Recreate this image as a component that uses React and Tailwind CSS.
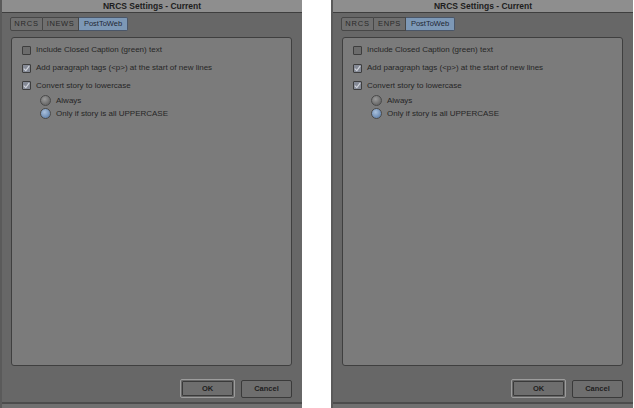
import React from 'react';

const font = { fontFamily: '"Liberation Sans", Arial, sans-serif' };

function Checkbox({ checked }) {
  return (
    <div
      className={`w-[9px] h-[9px] rounded-[1px] border border-[#3d3d3d] flex items-center justify-center ${
        checked ? 'bg-[#858a96]' : 'bg-[#6c6c6c]'
      }`}
    >
      {checked && (
        <svg className="w-[7px] h-[7px]" viewBox="0 0 10 10" fill="none">
          <path d="M1.5 5.5l2.5 2.5 4.5-6" stroke="#d2d5dc" strokeWidth="1.6" strokeLinecap="round" strokeLinejoin="round" />
        </svg>
      )}
    </div>
  );
}

function Radio({ selected }) {
  return (
    <div
      className={`w-[11px] h-[11px] rounded-full border border-[#4a4a4a] ${
        selected
          ? 'bg-[radial-gradient(circle_at_40%_35%,#a9c0dc,#6b8bb3_70%)]'
          : 'bg-[radial-gradient(circle_at_40%_35%,#9a9a9a,#6a6a6a_70%)]'
      }`}
    />
  );
}

function Dialog({ second }) {
  return (
    <div className="w-[302px] h-[408px] flex flex-col bg-[#676767] border-l-2 border-[#5a5a5a]" style={font}>
      <div className="h-[13px] bg-[#8e8e8e] border-b border-[#3e3e3e] flex items-center justify-center text-[8.5px] font-bold text-[#1d1d1d] leading-none">
        NRCS Settings - Current
      </div>
      <div className="flex-1 flex flex-col pl-[8px] pr-[10px]">
        <div className="mt-[4px] flex h-[14px] text-[7.5px] text-[#2a2a2a] leading-none">
          <div className="w-[33px] flex items-center justify-center border border-[#474747] rounded-l-[2px] bg-[#6f6f6f] tracking-[0.8px]">
            NRCS
          </div>
          <div className={`${second ? 'w-[32px]' : 'w-[36px]'} flex items-center justify-center border-y border-r border-[#474747] bg-[#6f6f6f] tracking-[0.6px]`}>
            {second ? 'ENPS' : 'INEWS'}
          </div>
          <div className="w-[49px] flex items-center justify-center border-y border-r border-[#4a5668] rounded-r-[2px] bg-[#7d98b6] text-[#1f2733]">
            PostToWeb
          </div>
        </div>
        <div className="mt-[6px] ml-[1px] h-[329px] rounded-[3px] border border-[#3f3f3f] bg-[#7b7b7b] pt-[3px] pl-[10px] text-[8px] text-[#262626] leading-none">
          <div className="h-[18px] flex items-center gap-[5px]">
            <Checkbox />
            <span>Include Closed Caption (green) text</span>
          </div>
          <div className="h-[18px] flex items-center gap-[5px]">
            <Checkbox checked />
            <span>Add paragraph tags (&lt;p&gt;) at the start of new lines</span>
          </div>
          <div className="h-[17px] flex items-center gap-[5px]">
            <Checkbox checked />
            <span>Convert story to lowercase</span>
          </div>
          <div className="h-[13px] flex items-center gap-[5px] pl-[18px]">
            <Radio />
            <span>Always</span>
          </div>
          <div className="h-[13px] flex items-center gap-[5px] pl-[18px]">
            <Radio selected />
            <span>Only if story is all UPPERCASE</span>
          </div>
        </div>
        <div className="mt-[13px] flex justify-end gap-[6px] text-[7.5px] font-bold text-[#1e1e1e] leading-none">
          <div className="w-[55px] h-[19px] rounded-[2px] border border-[#9c9c9c] p-[1px]">
            <div className="w-full h-full rounded-[1px] border border-[#3a3a3a] bg-[#6e6e6e] flex items-center justify-center">
              OK
            </div>
          </div>
          <div className="w-[51px] h-[18px] mt-[1px] rounded-[2px] border border-[#3a3a3a] bg-[#6e6e6e] flex items-center justify-center">
            Cancel
          </div>
        </div>
      </div>
      <div className="h-[6px] border-t-2 border-[#4c4c4c] bg-[#707070]" />
    </div>
  );
}

export default function App() {
  return (
    <div className="w-[634px] h-[408px] bg-white flex gap-[29px] overflow-hidden">
      <Dialog />
      <Dialog second />
    </div>
  );
}
